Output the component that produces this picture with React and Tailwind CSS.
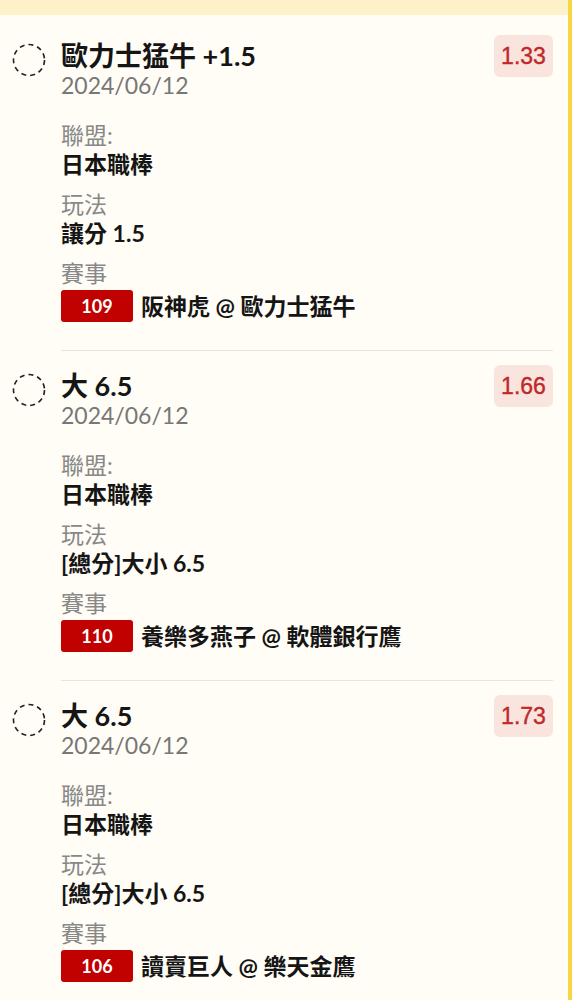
import React from "react";

const bets = [
  {
    id: 1,
    title: "歐力士猛牛 +1.5",
    date: "2024/06/12",
    odds: "1.33",
    league: "日本職棒",
    play: "讓分 1.5",
    no: "109",
    match: "阪神虎 @ 歐力士猛牛",
  },
  {
    id: 2,
    title: "大 6.5",
    date: "2024/06/12",
    odds: "1.66",
    league: "日本職棒",
    play: "[總分]大小 6.5",
    no: "110",
    match: "養樂多燕子 @ 軟體銀行鷹",
  },
  {
    id: 3,
    title: "大 6.5",
    date: "2024/06/12",
    odds: "1.73",
    league: "日本職棒",
    play: "[總分]大小 6.5",
    no: "106",
    match: "讀賣巨人 @ 樂天金鷹",
  },
];

const DashedCircle = () => (
  <svg width="34" height="34" viewBox="0 0 34 34" className="shrink-0 mt-[22px]">
    <circle cx="17" cy="17" r="15.5" fill="none" stroke="#222" strokeWidth="1.6" strokeDasharray="5 4" />
  </svg>
);

const BetCard = ({ bet }) => (
  <div className="flex gap-[15px] pl-3 pr-[15px]">
    <DashedCircle />
    <div className="flex-1 pt-[14px] pb-[28px] border-b border-[#e7e5df]">
      <div className="flex justify-between items-start">
        <div>
          <div className="mt-1 text-[27px] leading-[34px] font-bold text-[#151515]">{bet.title}</div>
          <div className="text-[23px] leading-6 text-[#777]">{bet.date}</div>
        </div>
        <div className="w-[59px] h-[42px] rounded-md bg-[#f9e4de] text-[#c0282a] flex items-center justify-center font-['Liberation_Sans',sans-serif] text-[23px] [-webkit-text-stroke:0.4px_#c0282a]">
          {bet.odds}
        </div>
      </div>

      <div className="mt-6">
        <div className="text-[23px] leading-[29px] text-[#888]">聯盟:</div>
        <div className="text-[23px] leading-[29px] font-bold text-[#151515]">{bet.league}</div>
      </div>
      <div className="mt-[11px]">
        <div className="text-[23px] leading-[29px] text-[#888]">玩法</div>
        <div className="text-[23px] leading-[29px] font-bold text-[#151515]">{bet.play}</div>
      </div>
      <div className="mt-[11px]">
        <div className="text-[23px] leading-[29px] text-[#888]">賽事</div>
        <div className="mt-0.5 flex items-center gap-2">
          <span className="w-[72px] h-8 rounded-[3px] bg-[#c10000] text-white text-[18px] font-bold flex items-center justify-center">
            {bet.no}
          </span>
          <span className="text-[23px] leading-8 font-bold text-[#151515]">{bet.match}</span>
        </div>
      </div>
    </div>
  </div>
);

export default function App() {
  return (
    <div className="min-h-screen bg-[#fffdf5] pr-[2px] font-['Lato','Noto_Sans_CJK_TC',sans-serif]">
      <div className="min-h-screen border-r-4 border-[#f8d448]">
        <div className="h-[15px] bg-[#fdf1c8]" />
        <div className="pt-[6px]">
          {bets.map((bet) => (
            <BetCard key={bet.id} bet={bet} />
          ))}
        </div>
      </div>
    </div>
  );
}
